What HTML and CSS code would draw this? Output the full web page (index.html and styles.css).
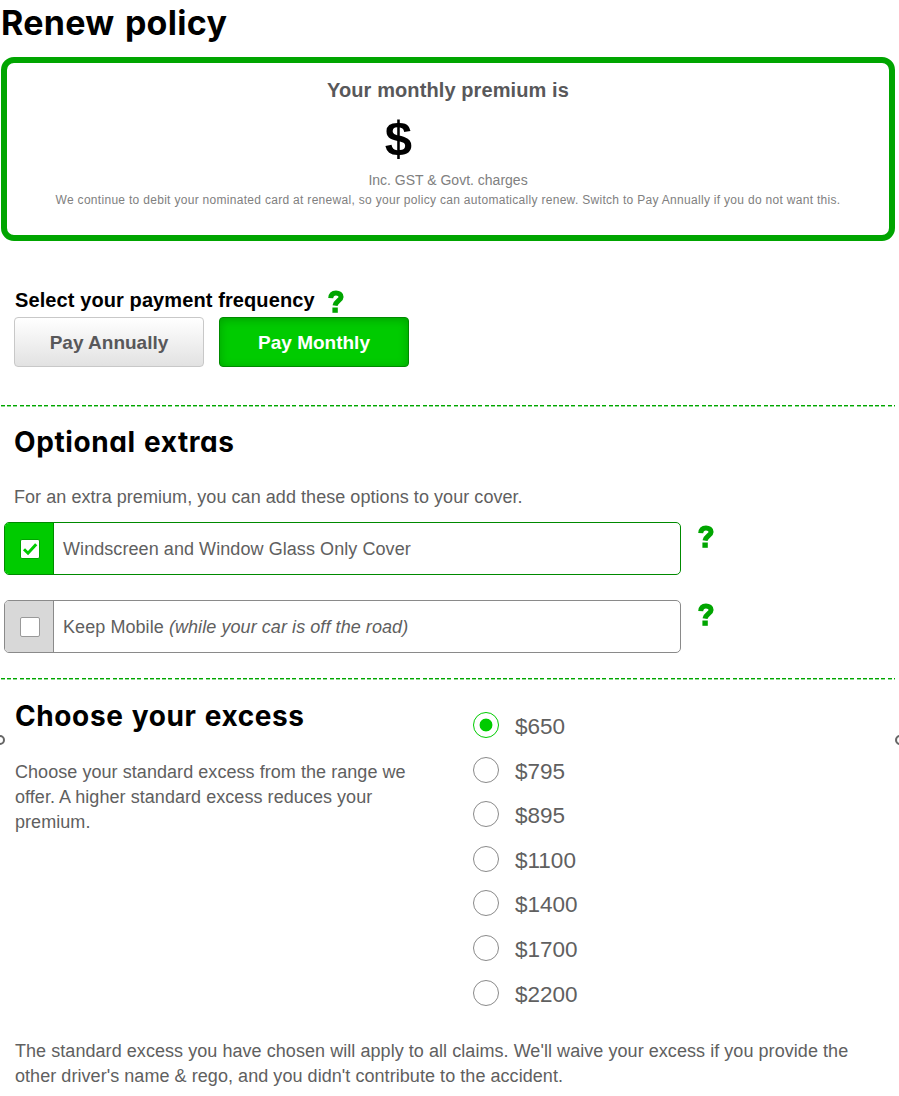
FILE: index.html
```
<!DOCTYPE html>
<html lang="en">
  <head>
    <meta charset="UTF-8" />
    <meta name="viewport" content="width=device-width, initial-scale=1.0" />
    <title>Renew policy</title>
    <link rel="stylesheet" href="styles.css">
  </head>
  <body>
    <svg class="sprite" width="0" height="0">
      <symbol id="help" viewBox="0 0 16 23">
        <path class="help-hook" d="M2.700 8.200C2.900 4.600 4.900 2.900 8 2.900c3 0 5.100 1.500 5.100 4C13.100 10.300 7.800 10.600 7 15.700" />
        <path d="M4.400 17.500H9.800V22.800H4.400z" />
      </symbol>
    </svg>

    <h1 class="page-title">Renew policy</h1>

    <section class="premium">
      <h3 class="premium-title">Your monthly premium is</h3>
      <div class="premium-amount">$</div>
      <p class="premium-tax">Inc. GST &amp; Govt. charges</p>
      <p class="premium-note">We continue to debit your nominated card at renewal, so your policy can automatically renew. Switch to Pay Annually if you do not want this.</p>
    </section>

    <section class="frequency">
      <div class="frequency-label">
        <span>Select your payment frequency</span>
        <svg class="help"><use href="#help" /></svg>
      </div>
      <div class="buttons">
        <button class="btn">Pay Annually</button>
        <button class="btn btn-active">Pay Monthly</button>
      </div>
    </section>

    <section class="extras">
      <h2 class="section-title">Optional extras</h2>
      <p class="text extras-text">For an extra premium, you can add these options to your cover.</p>
      <div class="option-row">
        <div class="option option-checked">
          <div class="option-side">
            <div class="box">
              <svg width="18" height="18" viewBox="0 0 18 18"><path d="M3 9.300L7 13.200L15.200 4.300" /></svg>
            </div>
          </div>
          <div class="option-name">Windscreen and Window Glass Only Cover</div>
        </div>
        <svg class="help"><use href="#help" /></svg>
      </div>
      <div class="option-row">
        <div class="option">
          <div class="option-side"><div class="box"></div></div>
          <div class="option-name">Keep Mobile <em>(while your car is off the road)</em></div>
        </div>
        <svg class="help"><use href="#help" /></svg>
      </div>
    </section>

    <section class="excess">
      <i class="handle handle-left"></i>
      <i class="handle handle-right"></i>
      <div class="excess-columns">
        <div class="excess-info">
          <h2 class="section-title">Choose your excess</h2>
          <p class="text">Choose your standard excess from the range we<br>offer. A higher standard excess reduces your<br>premium.</p>
        </div>
        <div class="amounts">
          <label class="amount"><i class="radio radio-checked"></i><span>$650</span></label>
          <label class="amount"><i class="radio"></i><span>$795</span></label>
          <label class="amount"><i class="radio"></i><span>$895</span></label>
          <label class="amount"><i class="radio"></i><span>$1100</span></label>
          <label class="amount"><i class="radio"></i><span>$1400</span></label>
          <label class="amount"><i class="radio"></i><span>$1700</span></label>
          <label class="amount"><i class="radio"></i><span>$2200</span></label>
        </div>
      </div>
      <p class="text excess-note">The standard excess you have chosen will apply to all claims. We'll waive your excess if you provide the<br>other driver's name &amp; rego, and you didn't contribute to the accident.</p>
    </section>
  </body>
</html>
```
FILE: styles.css
```
* {
  box-sizing: border-box;
}

body {
  margin: 0;
  background: #fff;
  color: #606060;
  font-family: "Liberation Sans", Arial, sans-serif;
  overflow: hidden;
}

h1,
h2,
h3,
p {
  margin: 0;
}

.sprite {
  display: block;
}

.page-title,
.section-title {
  color: #000;
  font-family: Inter, "Liberation Sans", sans-serif;
  font-feature-settings: "cv11";
  font-weight: 700;
}

.page-title {
  height: 57px;
  padding-left: 1px;
  font-size: 34px;
  letter-spacing: 0.3px;
  line-height: 46px;
  word-spacing: 2px;
}

.section-title {
  font-size: 28px;
  letter-spacing: 0.6px;
  line-height: 36px;
  word-spacing: 1px;
}

.text {
  font-size: 18px;
  letter-spacing: 0.055px;
  line-height: 25px;
}

/* premium */
.premium {
  width: 894px;
  height: 184px;
  margin-left: 1px;
  padding-top: 14px;
  border: 6px solid #00a500;
  border-radius: 13px;
  text-align: center;
}

.premium-title {
  color: #58585a;
  font-size: 20px;
  letter-spacing: 0.1px;
  line-height: 26px;
}

.premium-amount {
  height: 67px;
  padding-right: 99px;
  color: #000;
  font-size: 49px;
  font-weight: 700;
  line-height: 71px;
}

.premium-tax {
  color: #808080;
  font-size: 14px;
  line-height: 20px;
}

.premium-note {
  color: #808080;
  font-size: 12px;
  letter-spacing: 0.3px;
  line-height: 20px;
  white-space: nowrap;
}

/* payment frequency */
.frequency {
  height: 164px;
  padding: 47px 0 0 14px;
}

.frequency-label {
  display: flex;
  height: 29px;
  padding-left: 1px;
  color: #000;
  font-size: 20px;
  font-weight: 700;
  letter-spacing: 0.1px;
  line-height: 24px;
}

.frequency-label .help {
  margin: 2px 0 0 13px;
}

.help {
  width: 16px;
  height: 23px;
  fill: #00a500;
}

.help-hook {
  fill: none;
  stroke: #00a500;
  stroke-width: 5;
}

.buttons {
  display: flex;
  gap: 15px;
}

.btn {
  width: 190px;
  height: 50px;
  padding: 1px 0 0;
  border: 1px solid #c8c8c8;
  border-radius: 4px;
  background: linear-gradient(#fff, #e2e2e2);
  color: #58585a;
  font-family: inherit;
  font-size: 19px;
  font-weight: 700;
}

.btn-active {
  border-color: #008a00;
  background: #00cb00;
  box-shadow: inset 0 2px 10px rgba(0, 100, 0, 0.4);
  color: #fff;
}

/* dashed line above a section */
.extras,
.excess {
  background:
    repeating-linear-gradient(90deg, #00a500 0 4px, #fff 4px 6.200px) 1px 0 / 894px 1px no-repeat,
    repeating-linear-gradient(90deg, #8fdc8f 0 4px, #fff 4px 6.200px) 1px 1px / 894px 1px no-repeat;
}

.extras {
  height: 273px;
  padding-top: 19px;
}

.extras .section-title,
.extras-text {
  padding-left: 14px;
}

.extras-text {
  margin: 25px 0 12px;
}

.option-row {
  display: flex;
  gap: 17px;
  height: 78px;
  padding-left: 4px;
}

.option-row .help {
  margin-top: 3px;
}

.option {
  display: flex;
  width: 677px;
  height: 53px;
  border: 1px solid #8a8a8a;
  border-radius: 5px;
  overflow: hidden;
}

.option-side {
  display: flex;
  align-items: center;
  justify-content: center;
  width: 49px;
  padding-left: 2px;
  border-right: 1px solid #8a8a8a;
  background: #d8d8d8;
}

.box {
  width: 20px;
  height: 20px;
  border: 1px solid #999;
  border-radius: 2px;
  background: #fff;
}

.box svg {
  display: block;
  fill: none;
  stroke: #00cb00;
  stroke-width: 3;
}

.option-checked,
.option-checked .option-side {
  border-color: #008a00;
}

.option-checked .option-side {
  background: #00cb00;
}

.option-checked .box {
  border-color: #00a500;
}

.option-name {
  padding-left: 9px;
  font-size: 18px;
  letter-spacing: 0.07px;
  line-height: 52px;
}

/* excess */
.excess {
  position: relative;
  padding: 20px 0 0 15px;
}

.excess-columns {
  display: flex;
  height: 341px;
}

.excess-info {
  width: 458px;
}

.excess-info .text {
  margin-top: 26px;
}

.amounts {
  padding-top: 14px;
}

.amount {
  display: flex;
  gap: 16px;
  height: 44.600px;
  font-size: 22.500px;
  line-height: 30px;
}

.radio {
  width: 26px;
  height: 26px;
  border: 1px solid #8a8a8a;
  border-radius: 50%;
}

.radio-checked {
  border-color: #00cb00;
  background: radial-gradient(circle, #00cb00 6px, transparent 6.800px);
}

.handle {
  position: absolute;
  top: 57px;
  width: 10px;
  height: 10px;
  border: 2px solid #666;
  border-radius: 50%;
}

.handle-left {
  left: -5px;
}

.handle-right {
  right: -6px;
}
```
